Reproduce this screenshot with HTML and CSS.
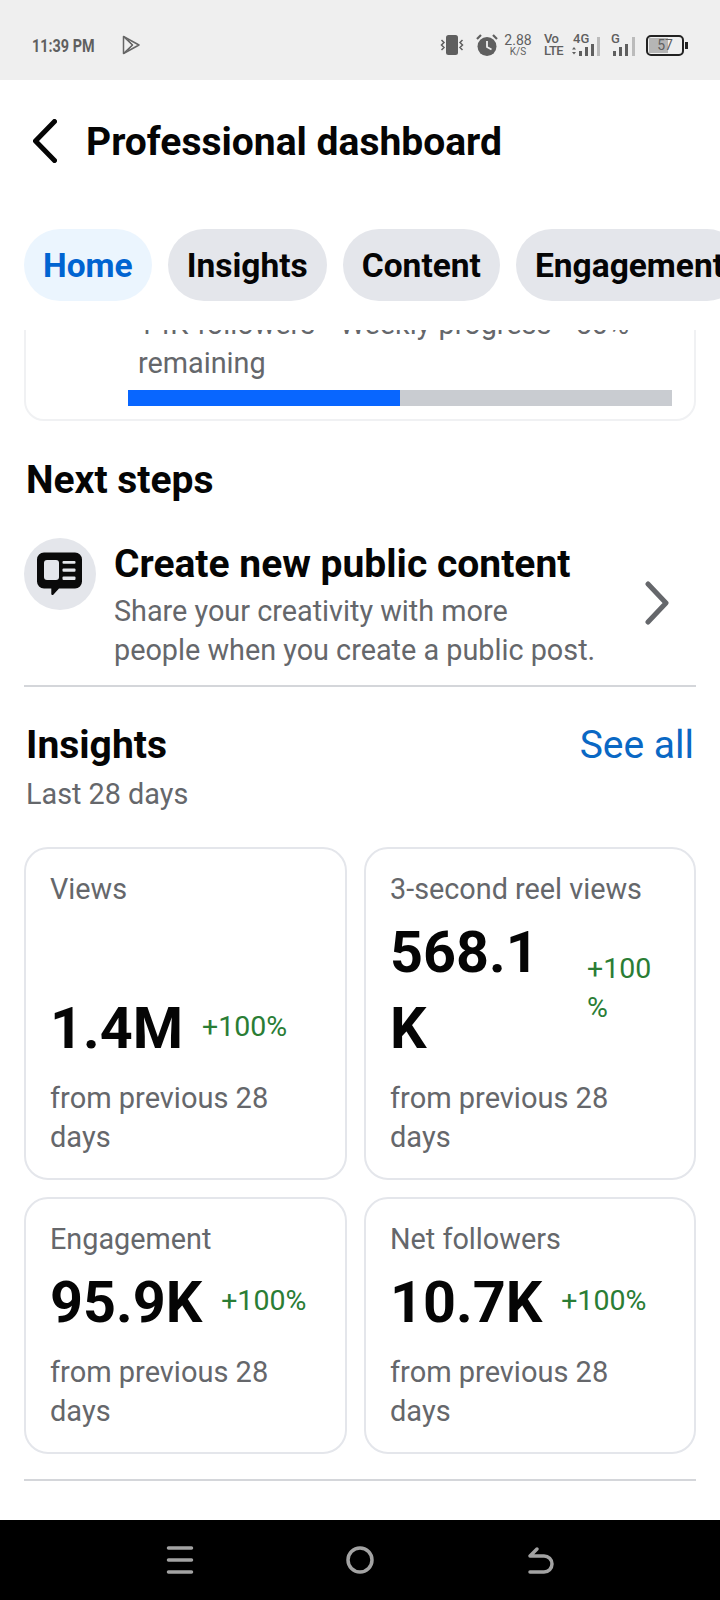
FILE: index.html
```html
<!DOCTYPE html>
<html lang="en">
<head>
    <meta charset="UTF-8">
    <meta name="viewport" content="width=device-width, initial-scale=1.0">
    <title>Professional dashboard</title>
    <link rel="stylesheet" href="styles.css">
</head>
<body>
    <div class="statusbar">
        <div class="status-left">
            <span class="clock">11:39 PM</span>
            <svg width="18" height="20" viewBox="0 0 18 20" fill="none" stroke="#666" stroke-width="1.5" stroke-linejoin="round"><path d="M1.5 1.5 17 10 1.5 18.5Z"/><path d="M1.5 1.5 10.5 10 1.500 18.500"/><path d="M6 5 10.500 10 6 15" stroke-width="1"/></svg>
        </div>
        <div class="status-right">
            <svg class="st-vibrate" width="24" height="22" viewBox="0 0 24 22" fill="#5f5f5f"><rect x="6" y="1" width="12" height="20" rx="2.5"/><path d="M1.500 6 4 8.500 1.500 11 4 13.500 1.500 16M22.500 6 20 8.500 22.500 11 20 13.500 22.500 16" fill="none" stroke="#5f5f5f" stroke-width="1.500"/></svg>
            <svg class="st-alarm" width="22" height="24" viewBox="0 0 22 24"><circle cx="11" cy="13.500" r="9.500" fill="#5f5f5f"/><path d="M11 8V14L15.500 16.500" fill="none" stroke="#efefef" stroke-width="1.800"/><path d="M1 6 5 2M21 6 17 2" stroke="#5f5f5f" stroke-width="2.200"/></svg>
            <div class="speed"><span>2.88</span><small>K/S</small></div>
            <div class="volte"><span>Vo</span><span>LTE</span></div>
            <div class="signal">
                <span class="net-label">4G</span>
                <svg width="28" height="22" viewBox="0 0 28 22" fill="#5f5f5f"><rect x="7" y="17" width="3" height="5"/><rect x="13" y="13" width="3" height="9"/><rect x="19" y="10" width="3" height="12"/><rect x="25" y="3" width="3" height="19" fill="#bbb"/><path d="M0 15.500h4L2 13ZM0 18h4l-2 2.500Z"/></svg>
            </div>
            <div class="signal signal-g">
                <span class="net-label">G</span>
                <svg width="25" height="22" viewBox="0 0 25 22" fill="#5f5f5f"><rect x="3" y="17" width="3" height="5"/><rect x="9" y="13" width="3" height="9"/><rect x="15" y="10" width="3" height="12"/><rect x="22" y="3" width="3" height="19" fill="#bbb"/></svg>
            </div>
            <div class="battery"><span class="battery-box"><span class="battery-fill"></span><span class="battery-num">57</span></span><span class="battery-tip"></span></div>
        </div>
    </div>

    <div class="topbar">
        <svg width="24" height="44" viewBox="0 0 24 44" fill="none" stroke="#050505" stroke-width="5" stroke-linecap="round" stroke-linejoin="round"><path d="M21.500 2.500 2.500 22 21.500 41.500"/></svg>
        <h1>Professional dashboard</h1>
    </div>

    <div class="tabs">
        <div class="tab active">Home</div>
        <div class="tab">Insights</div>
        <div class="tab">Content</div>
        <div class="tab">Engagement</div>
    </div>

    <div class="scroll">
        <div class="progress-card">
            <div class="progress-text">14K followers · Weekly progress · 50%<br>remaining</div>
            <div class="bar"><div class="bar-fill"></div></div>
        </div>

        <h2 class="next-title">Next steps</h2>
        <div class="step">
            <div class="step-icon">
                <svg width="46" height="46" viewBox="0 0 46 46"><path d="M7 1.500h31a7 7 0 0 1 7 7v22a7 7 0 0 1-7 7H22l-5.500 6a1.200 1.200 0 0 1-2.200-.8v-5.200H7a7 7 0 0 1-7-7v-22a7 7 0 0 1 7-7Z" fill="#0a0a0a"/><rect x="7" y="9" width="15" height="20" rx="3" fill="#e4e6eb"/><rect x="25.500" y="10" width="13" height="2.800" rx="1" fill="#e4e6eb"/><rect x="25.500" y="17.500" width="13" height="3.200" rx="1" fill="#e4e6eb"/><rect x="25.500" y="25.500" width="13" height="3.500" rx="1" fill="#e4e6eb"/></svg>
            </div>
            <div class="step-body">
                <div class="step-title">Create new public content</div>
                <div class="step-desc">Share your creativity with more<br>people when you create a public post.</div>
            </div>
            <svg class="chevron" width="24" height="44" viewBox="0 0 24 44" fill="none" stroke="#65676b" stroke-width="5" stroke-linecap="round" stroke-linejoin="round"><path d="M3 3 21 22 3 41"/></svg>
        </div>

        <div class="insights">
            <div class="insights-head">
                <h2>Insights</h2>
                <a class="see-all" href="#insights">See all</a>
            </div>
            <div class="insights-sub">Last 28 days</div>
            <div class="cards">
                <div class="card">
                    <div class="card-label">Views</div>
                    <div class="card-value">
                        <span class="num">1.4M</span>
                        <span class="pct">+100%</span>
                    </div>
                    <div class="card-note">from previous 28 days</div>
                </div>
                <div class="card">
                    <div class="card-label">3-second reel views</div>
                    <div class="card-value top">
                        <span class="num narrow">568.1<br>K</span>
                        <span class="pct wrapped">+100<br>%</span>
                    </div>
                    <div class="card-note">from previous 28 days</div>
                </div>
                <div class="card">
                    <div class="card-label">Engagement</div>
                    <div class="card-value">
                        <span class="num">95.9K</span>
                        <span class="pct">+100%</span>
                    </div>
                    <div class="card-note">from previous 28 days</div>
                </div>
                <div class="card">
                    <div class="card-label">Net followers</div>
                    <div class="card-value">
                        <span class="num">10.7K</span>
                        <span class="pct">+100%</span>
                    </div>
                    <div class="card-note">from previous 28 days</div>
                </div>
            </div>
        </div>
    </div>

    <div class="navkeys">
        <svg width="28" height="28" viewBox="0 0 28 28" stroke="#a3a3a3" stroke-width="3.500" stroke-linecap="round"><path d="M2.500 2H25.500M2.500 14H25.500M2.500 26H25.500"/></svg>
        <svg width="28" height="28" viewBox="0 0 28 28" fill="none" stroke="#a3a3a3" stroke-width="3.500"><circle cx="14" cy="14" r="12"/></svg>
        <svg width="28" height="28" viewBox="0 0 28 28" fill="none" stroke="#a3a3a3" stroke-width="3.500" stroke-linecap="round" stroke-linejoin="round"><path d="M4 26H18a8 8 0 0 0 0-16H4L11 3"/></svg>
    </div>
</body>
</html>
```

FILE: styles.css
```css
* {
    box-sizing: border-box;
}
body {
    font-family: Roboto, "Liberation Sans", sans-serif;
    margin: 0;
    width: 720px;
    height: 1600px;
    display: flex;
    flex-direction: column;
    overflow: hidden;
    background-color: #fff;
    color: #050505;
}
.statusbar {
    height: 80px;
    flex-shrink: 0;
    background-color: #efefef;
    display: flex;
    justify-content: space-between;
    align-items: center;
    padding: 10px 32px 0 32px;
    color: #5f5f5f;
}
.status-left {
    display: flex;
    align-items: center;
    gap: 28px;
}
.clock {
    font-size: 18px;
    font-weight: 700;
    width: 62px;
    white-space: nowrap;
    transform: scaleX(0.8);
    transform-origin: left center;
}
.status-right {
    display: flex;
    align-items: center;
    gap: 8px;
}
.st-vibrate {
    margin-right: 4px;
}
.st-alarm {
    margin-right: -2px;
}
.speed {
    display: flex;
    flex-direction: column;
    align-items: center;
    font-size: 14px;
    line-height: 14px;
    width: 28px;
    margin-right: 4px;
}
.speed small {
    font-size: 10px;
    line-height: 10px;
}
.volte {
    display: flex;
    flex-direction: column;
    font-size: 13px;
    font-weight: 500;
    line-height: 12px;
    letter-spacing: -0.5px;
    width: 20px;
}
.signal {
    position: relative;
    display: flex;
}
.signal-g {
    margin-left: 2px;
}
.net-label {
    position: absolute;
    left: 1px;
    top: -1px;
    font-size: 13px;
    line-height: 12px;
    font-weight: 500;
}
.battery {
    display: flex;
    align-items: center;
    margin-left: 3px;
}
.battery-box {
    position: relative;
    width: 38px;
    height: 21px;
    border: 2px solid #222;
    border-radius: 5px;
    display: flex;
    align-items: center;
    justify-content: center;
    overflow: hidden;
}
.battery-fill {
    position: absolute;
    left: 1px;
    top: 1px;
    bottom: 1px;
    width: 57%;
    background-color: #b5b5b5;
}
.battery-num {
    position: relative;
    font-size: 14px;
}
.battery-tip {
    width: 3px;
    height: 7px;
    margin-left: 1px;
    background-color: #222;
}
.topbar {
    height: 122px;
    flex-shrink: 0;
    display: flex;
    align-items: center;
    gap: 29px;
    padding-left: 33px;
}
.topbar h1 {
    margin: 2px 0 0;
    font-size: 39px;
    font-weight: 700;
}
.tabs {
    flex-shrink: 0;
    display: flex;
    gap: 16px;
    padding: 27px 0 0 24px;
    height: 128px;
    overflow: hidden;
}
.tab {
    flex-shrink: 0;
    height: 72px;
    padding: 0 19px;
    display: flex;
    align-items: center;
    border-radius: 36px;
    background-color: #e4e6eb;
    font-size: 33.5px;
    font-weight: 700;
    white-space: nowrap;
}
.tab.active {
    background-color: #ebf5fe;
    color: #0064d1;
}
.scroll {
    flex: 1;
    min-height: 0;
    overflow: hidden;
    padding: 0 24px;
}
.progress-card {
    margin-top: -27px;
    border: 2px solid #f0f1f3;
    border-radius: 20px;
    padding: 0 22px 13px 102px;
}
.progress-text {
    font-size: 28.8px;
    line-height: 39px;
    word-spacing: 1.2px;
    color: #65676b;
    padding-left: 10px;
    white-space: nowrap;
}
.bar {
    height: 16px;
    margin-top: 7px;
    background-color: #c9ccd1;
}
.bar-fill {
    width: 50%;
    height: 100%;
    background-color: #0866ff;
}
.next-title {
    margin: 36px 0 0 2px;
    font-size: 39px;
    line-height: 46px;
    font-weight: 700;
}
.step {
    display: flex;
    align-items: flex-start;
    gap: 18px;
    height: 149px;
    margin-top: 35px;
    border-bottom: 2px solid #d4d6da;
}
.step-icon {
    width: 72px;
    height: 72px;
    flex-shrink: 0;
    border-radius: 50%;
    background-color: #e4e6eb;
    display: flex;
    align-items: center;
    justify-content: center;
}
.step-body {
    flex: 1;
    min-width: 0;
    padding-top: 3px;
}
.step-title {
    font-size: 39px;
    line-height: 46px;
    font-weight: 700;
}
.step-desc {
    font-size: 28.8px;
    line-height: 39px;
    color: #65676b;
    white-space: nowrap;
    margin-top: 5px;
}
.chevron {
    margin: 43px 27px 0 0;
    flex-shrink: 0;
}
.insights {
    border-bottom: 2px solid #d4d6da;
    padding-bottom: 25px;
}
.insights-head {
    display: flex;
    justify-content: space-between;
    align-items: center;
    padding: 35px 2px 0;
}
.insights-head h2 {
    margin: 0;
    font-size: 39px;
    line-height: 46px;
    font-weight: 700;
}
.see-all {
    font-size: 39px;
    line-height: 46px;
    color: #0a68c4;
    text-decoration: none;
}
.insights-sub {
    margin: 7px 0 0 2px;
    font-size: 28.8px;
    line-height: 38px;
    color: #65676b;
}
.cards {
    display: grid;
    grid-template-columns: 323px 332px;
    grid-template-rows: 333px 257px;
    gap: 17px;
    margin-top: 34px;
}
.card {
    border: 2px solid #e4e6eb;
    border-radius: 24px;
    padding: 20px 22px 0 24px;
    display: flex;
    flex-direction: column;
}
.card-label {
    font-size: 28.8px;
    line-height: 40px;
    color: #65676b;
    white-space: nowrap;
}
.card-value {
    display: flex;
    align-items: center;
    gap: 19px;
    margin-top: auto;
}
.card-value.top {
    align-items: flex-start;
}
.num {
    font-size: 57.5px;
    line-height: 76px;
    font-weight: 700;
}
.num.narrow {
    width: 176px;
    flex-shrink: 0;
}
.pct {
    font-size: 28.5px;
    line-height: 38px;
    color: #2a7d35;
    margin-bottom: 4px;
}
.pct.wrapped {
    line-height: 39px;
    margin: 34px 0 0 2px;
}
.card-note {
    font-size: 29px;
    line-height: 39px;
    color: #65676b;
    margin: 12px 0 21px;
    max-width: 240px;
}
.navkeys {
    height: 80px;
    flex-shrink: 0;
    background-color: #000;
    display: flex;
    justify-content: center;
    align-items: center;
    gap: 152px;
}
```
